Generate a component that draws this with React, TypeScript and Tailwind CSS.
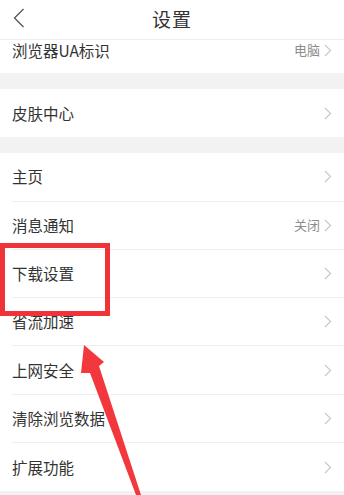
import React from 'react';

interface RowProps {
  label: string;
  value?: string;
  last?: boolean;
}

const Chevron = () => (
  <svg width="8" height="13" viewBox="0 0 8 13" className="ml-1">
    <path d="M1 1l5.5 5.5L1 12" fill="none" stroke="#c9c9c9" strokeWidth="1.2" />
  </svg>
);

const Row = ({ label, value, last }: RowProps) => (
  <div className="bg-white pl-3">
    <div
      className={
        'flex h-[48.3px] items-center justify-between pr-3 ' +
        (last ? '' : 'border-b border-[#efefef]')
      }
    >
      <span className="text-[15.5px] text-[#333]">{label}</span>
      <span className="flex items-center text-[13px] text-[#8c8c8c]">
        {value}
        <Chevron />
      </span>
    </div>
  </div>
);

export default function App() {
  const rows: RowProps[] = [
    { label: '主页' },
    { label: '消息通知', value: '关闭' },
    { label: '下载设置' },
    { label: '省流加速' },
    { label: '上网安全' },
    { label: '清除浏览数据' },
    { label: '扩展功能', last: true },
  ];

  return (
    <div
      className="relative h-[495px] w-[344px] overflow-hidden bg-[#f2f2f2]"
      style={{ fontFamily: '"Noto Sans CJK SC", "Noto Sans", sans-serif' }}
    >
      {/* header */}
      <div className="relative flex h-10 items-center justify-center border-b border-[#eeeeee] bg-white">
        <svg width="12" height="20" viewBox="0 0 12 20" className="absolute left-[13px] top-[8px]">
          <path d="M10.5 1L1.5 10l9 9" fill="none" stroke="#555" strokeWidth="1.3" />
        </svg>
        <span className="text-[19px] tracking-[1px] text-[#333]">设置</span>
      </div>

      {/* partially scrolled row */}
      <div className="flex h-[33px] items-start justify-between bg-white pl-3 pr-3 pt-[1px]">
        <span className="text-[15.5px] leading-[18px] text-[#333]">浏览器UA标识</span>
        <span className="flex items-center text-[13px] leading-[18px] text-[#8c8c8c]">
          电脑
          <Chevron />
        </span>
      </div>

      <div className="h-4" />
      <Row label="皮肤中心" last />
      <div className="h-4" />

      {rows.map((r) => (
        <Row key={r.label} {...r} />
      ))}

      {/* annotation box */}
      <div className="absolute left-0 top-[243px] h-[73px] w-[110px] border-[5px] border-[#ef3339]" />

      {/* annotation arrow */}
      <svg width="344" height="495" className="pointer-events-none absolute left-0 top-0">
        <polygon
          points="84,345 104,362 99,366 141,495 136,495 90,373 81,373"
          fill="#f2383c"
        />
      </svg>
    </div>
  );
}
